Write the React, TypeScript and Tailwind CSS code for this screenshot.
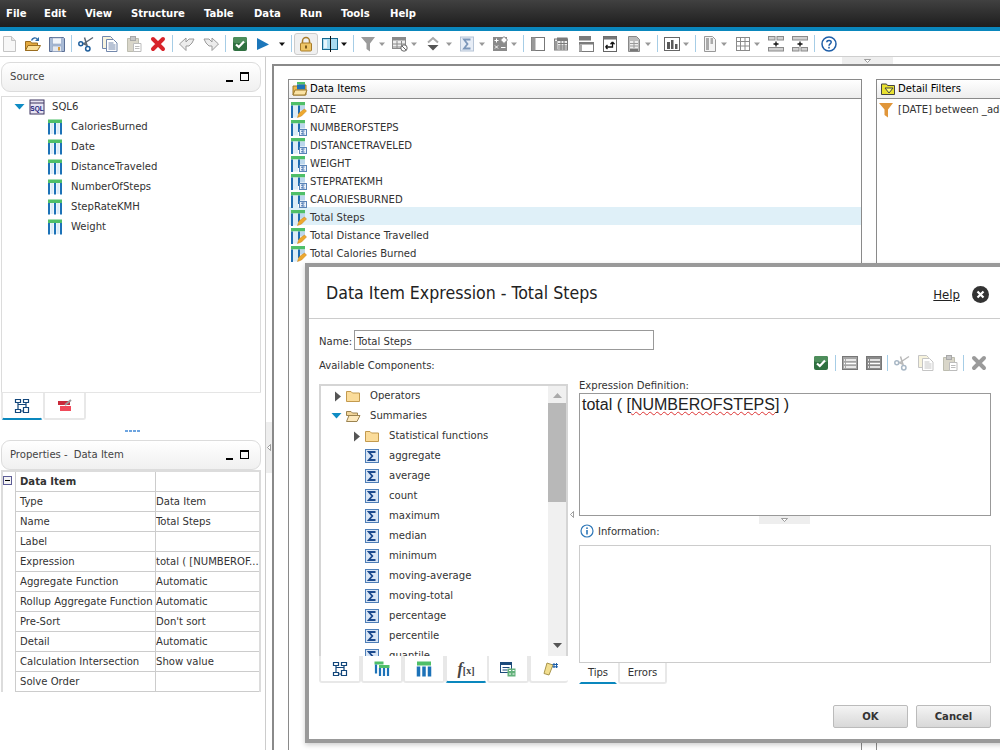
import type { ReactNode } from "react";

const S = ({ children, w = 16, h = 16 }: { children: ReactNode; w?: number; h?: number }) => (
  <svg width={w} height={h} viewBox={`0 0 ${w} ${h}`} className="shrink-0 block">
    {children}
  </svg>
);

// toolbar drawings
const NewDoc = () => (
  <S>
    <path d="M2.500 0.500h8l4 4v11h-12z" fill="#f7f7f7" stroke="#c4c4c4" />
    <path d="M10.500 0.500v4h4" fill="#e4e4e4" stroke="#c4c4c4" />
  </S>
);
const OpenFolder = () => (
  <S>
    <path d="M0.500 5.500h5l1 1.500h6v7.500H0.500z" fill="#e3a93f" stroke="#9a6c1e" />
    <path d="M0.500 14.500l2.500-5h12.500l-3 5z" fill="#fbdf97" stroke="#9a6c1e" />
    <path d="M6.500 4.500c1-3 4.500-3.500 6-1" fill="none" stroke="#2f6ca8" strokeWidth="1.400" />
    <path d="M14 1v4h-4z" fill="#2f6ca8" />
  </S>
);
const Save = () => (
  <S>
    <path d="M0.500 1.500h14l1 1v13H0.500z" fill="#a9bbd6" stroke="#5d7096" />
    <rect x="3.500" y="2" width="9" height="6" fill="#f2f5fa" stroke="#8fa2c0" strokeWidth="0.600" />
    <rect x="3.500" y="10" width="9" height="5.500" fill="#e5e9f0" stroke="#8fa2c0" strokeWidth="0.600" />
    <rect x="9" y="11" width="2" height="3.500" fill="#d79a3b" />
  </S>
);
const Cut = ({ faded = false }: { faded?: boolean }) => (
  <S>
    <g fill="none" strokeWidth="1.500">
      <path d="M4 7l5.500 2.500M15 1.500L6 7.500M6.500 1.500l2.800 9" stroke={faded ? "#b9b9b9" : "#5f6a75"} />
      <circle cx="2.800" cy="7.800" r="2" stroke={faded ? "#a9b8c6" : "#1f5f9c"} />
      <circle cx="9.800" cy="12.800" r="2.200" stroke={faded ? "#a9b8c6" : "#1f5f9c"} />
    </g>
  </S>
);
const Copy = ({ faded = false }: { faded?: boolean }) => {
  const c = faded ? "#c5c5c5" : "#7388ac";
  return (
    <S>
      <path d="M0.500 0.500h8l2 2v10h-10z" fill="#f7f3dd" stroke={c} />
      <path d="M4.500 3.500h7l3.500 3.500v8.500H4.500z" fill="#fff" stroke={c} />
      <path d="M6.500 7h5M6.500 9h7M6.500 11h7M6.500 13h7" stroke={c} />
    </S>
  );
};
const Paste = () => (
  <S>
    <path d="M1.500 2.500h11v13h-11z" fill="#d9d6c9" stroke="#bdbdb0" />
    <rect x="4.500" y="0.500" width="5" height="4" fill="#c6c6c6" stroke="#a8a8a8" />
    <path d="M7.500 7.500h7.500v8H7.500z" fill="#fff" stroke="#bcbcbc" />
    <path d="M9 10.500h4.500M9 12.500h4.500" stroke="#bcbcbc" />
  </S>
);
const Del = ({ faded = false }: { faded?: boolean }) => (
  <S>
    <path
      d="M3 3l10 10M13 3L3 13"
      stroke={faded ? "#9a9a9a" : "#d8232a"}
      strokeWidth="4"
      strokeLinecap="round"
    />
  </S>
);
const Undo = ({ flip = false }: { flip?: boolean }) => (
  <S>
    <path
      d={flip ? "M1 3h5l3 3V2l6.500 6L9 14.500V10H6L3 7z" : "M15 3h-5L7 6V2L0.500 8 7 14.500V10h3l3-3z"}
      fill="#ececec"
      stroke="#9a9a9a"
    />
  </S>
);
const Check = () => (
  <S>
    <rect x="1" y="1" width="14" height="14" rx="2" fill="#2f7040" />
    <rect x="1" y="1" width="14" height="6" rx="2" fill="#4d8d5b" />
    <path d="M4 8.500l2.800 2.500L12 5.500" fill="none" stroke="#fff" strokeWidth="2.200" />
  </S>
);
const Run = () => (
  <S>
    <path d="M2 2l12 6.500L2 14z" fill="#1c76ba" />
  </S>
);
const Lock = () => (
  <S>
    <path d="M4.500 7V5a3.500 3.500 0 017 0v2" fill="none" stroke="#a87c2a" strokeWidth="1.500" />
    <rect x="2.500" y="7" width="11" height="8" rx="1" fill="#eec566" stroke="#a87c2a" />
    <rect x="7" y="9.500" width="2" height="3" fill="#7a5a1c" />
  </S>
);
const Split = () => (
  <S>
    <rect x="0.500" y="2.500" width="15" height="11" fill="#a9dbf0" stroke="#17688f" />
    <rect x="2" y="4" width="3" height="8" fill="#e6f5fb" />
    <path d="M8.500 0v16" stroke="#111" />
  </S>
);
const Funnel = ({ c = "#9b9b9b" }: { c?: string }) => (
  <S>
    <path d="M1 1h14L10 7.500V15.500L6.500 13V7.500z" fill={c} />
  </S>
);
const TableOff = () => (
  <S>
    <rect x="0.500" y="1.500" width="13" height="11" fill="#eee" stroke="#8a8a8a" />
    <rect x="0.500" y="1.500" width="13" height="3" fill="#8a8a8a" />
    <path d="M1 8h13M1 11h13M5 5v8M9.500 5v8" stroke="#8a8a8a" />
    <circle cx="12" cy="12" r="3.200" fill="#fff" stroke="#666" />
    <path d="M10 10l4 4" stroke="#666" />
  </S>
);
const Sort = () => (
  <S>
    <path d="M3 6.500L8 2l5 4.500" fill="none" stroke="#aaa" strokeWidth="2" />
    <path d="M2.500 9h11L8 14.500z" fill="#555" />
  </S>
);
const SigmaTool = () => (
  <S>
    <rect x="1.500" y="1" width="13" height="14" fill="#e7edf6" stroke="#b6c4d6" />
    <path d="M11.500 3.500H5L8.500 8 5 12.500h6.500" fill="none" stroke="#7c97ba" strokeWidth="1.800" />
  </S>
);
const Calc = () => (
  <S>
    <rect x="1" y="1" width="14" height="14" fill="#8a8a8a" />
    <path d="M2.500 4.500h4M4.500 2.500v4M9 11.500h4.500M3 9.500l3 3M6 9.500l-3 3" stroke="#fff" />
    <path d="M12 0.500l3.500 3.500-3.500 3.500L8.500 4z" fill="#fff" stroke="#888" />
  </S>
);
const SideBar = () => (
  <S>
    <rect x="1.500" y="1.500" width="13" height="13" fill="#fff" stroke="#777" />
    <rect x="1.500" y="1.500" width="4" height="13" fill="#999" />
  </S>
);
const GridBox = () => (
  <S>
    <rect x="1.500" y="3" width="13" height="11" fill="#eee" stroke="#7b7b7b" />
    <rect x="4" y="1.500" width="10.500" height="3.500" fill="#7b7b7b" />
    <rect x="1.500" y="5" width="3" height="9" fill="#999" />
    <path d="M5 7.500h9.500M5 10h9.500M5 12h9.500M8 5v9M11 5v9" stroke="#7b7b7b" />
  </S>
);
const Stack = () => (
  <S>
    <rect x="1" y="0" width="12" height="4.500" fill="#7b7b7b" />
    <rect x="1.500" y="6.500" width="14" height="9" fill="#fff" stroke="#7b7b7b" />
    <rect x="1" y="6" width="15" height="2.500" fill="#7b7b7b" />
    <rect x="1" y="8.500" width="3" height="7" fill="#aaa" />
  </S>
);
const Swap = () => (
  <S>
    <rect x="1.500" y="0.500" width="13" height="15" fill="#fff" stroke="#666" />
    <rect x="1.500" y="0.500" width="13" height="3" fill="#777" />
    <path d="M4 11h6.500V7M3.500 11l2-2M3.500 11l2 2M10.500 6l-2 2.200M10.500 6l2 2.200" fill="none" stroke="#111" strokeWidth="1.300" />
  </S>
);
const Page = () => (
  <S>
    <path d="M2.500 0.500h8l3 3v12h-11z" fill="#bbb" stroke="#888" />
    <path d="M4 5h8v7H4z" fill="#eee" />
    <path d="M4 7.500h8M4 10h8M8 5v7" stroke="#999" />
    <rect x="4" y="13" width="8" height="2" fill="#777" />
  </S>
);
const Bars = () => (
  <S>
    <rect x="0.500" y="1.500" width="15" height="13" fill="#fff" stroke="#666" />
    <path d="M3 6h3v7H3zM7 4h2.500v9H7zM11 8h2.500v5H11z" fill="#5a5a5a" />
  </S>
);
const Blocks = () => (
  <S>
    <path d="M2.500 0.500h8l3 3v12h-11z" fill="#f4f4f4" stroke="#999" />
    <path d="M4 2h3v12H4zM8.500 2H11v6H8.500z" fill="#aaa" />
  </S>
);
const Cells = () => (
  <S>
    <rect x="1.500" y="1.500" width="13" height="13" fill="#fff" stroke="#8a8a8a" />
    <path d="M5.500 2v12M10 2v12M2 5.500h12M2 10h12" stroke="#8a8a8a" />
  </S>
);
const RowIns = ({ alt = false }: { alt?: boolean }) => (
  <S>
    {alt ? (
      <>
        <rect x="0.500" y="0.500" width="15" height="3.500" fill="#d0d0d0" stroke="#8a8a8a" />
        <rect x="0.500" y="11.500" width="6.500" height="3.500" fill="#d0d0d0" stroke="#8a8a8a" />
        <rect x="9" y="11.500" width="6.500" height="3.500" fill="#d0d0d0" stroke="#8a8a8a" />
      </>
    ) : (
      <>
        <rect x="0.500" y="0.500" width="6.500" height="3.500" fill="#d0d0d0" stroke="#8a8a8a" />
        <rect x="9" y="0.500" width="6.500" height="3.500" fill="#d0d0d0" stroke="#8a8a8a" />
        <rect x="0.500" y="11.500" width="15" height="3.500" fill="#d0d0d0" stroke="#8a8a8a" />
      </>
    )}
    <path d="M5.500 8h5M8 5.500v5" stroke="#111" strokeWidth="1.300" />
  </S>
);
const HelpIcon = () => (
  <S>
    <circle cx="8" cy="8" r="7" fill="#fff" stroke="#1e5ea8" strokeWidth="1.500" />
    <path d="M5.800 6.200C6 3.800 10.300 3.900 10.200 6.300 10.100 8 8 7.800 8 9.800" fill="none" stroke="#1e5ea8" strokeWidth="1.500" />
    <rect x="7.200" y="10.800" width="1.600" height="1.700" fill="#1e5ea8" />
  </S>
);
const Drop = ({ dark = false }: { dark?: boolean }) => (
  <svg width="8" height="16" viewBox="0 0 8 16" className="shrink-0 block">
    <path d="M1 6.500h6l-3 3.500z" fill={dark ? "#111" : "#999"} />
  </svg>
);
const Sep = ({ className }: { className: string }) => (
  <div className={`h-[17px] w-px shrink-0 bg-[#a6cde6] ${className}`} />
);

// tree and list drawings
const DataCol = ({ badge = "pencil" }: { badge?: "pencil" | "box" }) => (
  <S>
    <rect x="0" y="0" width="14" height="3.500" fill="#4fbf68" />
    <path d="M1 3.500V16M8 3.500V12" stroke="#1f6bb0" strokeWidth="2" />
    <rect x="2" y="3.500" width="5" height="12" fill="#dcecf7" />
    <rect x="9" y="3.500" width="5" height="5" fill="#bcd6ec" />
    {badge === "pencil" ? (
      <path d="M6.500 15.500l1.500-4.500 5.500-4 2 2-5 5z" fill="#eda82e" stroke="#c77f14" strokeWidth="0.500" />
    ) : (
      <>
        <rect x="8.500" y="9.500" width="7" height="6" fill="#eaf1fa" stroke="#5a84b8" />
        <path d="M13.500 11h-3l1.500 1.500-1.500 1.500h3" fill="none" stroke="#2f62a5" />
      </>
    )}
  </S>
);
const Field = () => (
  <S>
    <rect x="1" y="0.500" width="14" height="3.500" fill="#4fbf68" />
    <path d="M2 4v11.500M8 4v11.500M14 4v11.500" stroke="#1c72b8" strokeWidth="2" />
    <rect x="9.500" y="4" width="3" height="11" fill="#dcecf7" />
    <rect x="3.500" y="4" width="3" height="11" fill="#dcecf7" />
  </S>
);
const SqlIcon = () => (
  <S>
    <rect x="1" y="1" width="14" height="14" fill="#e7e4f2" stroke="#3c3560" />
    <path d="M1 4h14" stroke="#3c3560" />
    <text x="8" y="12" textAnchor="middle" fontSize="6.500" fontWeight="700" fill="#20207a" fontFamily="Liberation Sans, sans-serif">
      SQL
    </text>
  </S>
);
const ClosedFolder = () => (
  <S>
    <path d="M1.500 3.500h4.500l1.500 1.500h7v8.500h-13z" fill="#fbdc9a" stroke="#c39a4e" />
  </S>
);
const OpenFolderSm = () => (
  <S>
    <path d="M1.500 3.500h4.500l1.500 1.500h5v2.500h-11z" fill="#f2d59a" stroke="#9b8350" />
    <path d="M1.500 13.500l2.500-6h11l-3 6z" fill="#fde9bd" stroke="#9b8350" />
  </S>
);
const SigmaBox = () => (
  <S>
    <rect x="1.500" y="1.500" width="13" height="13" fill="#d8e5f5" stroke="#4f7fb8" />
    <path d="M11.500 4H4.800L8.300 8l-3.500 4h6.700" fill="none" stroke="#1b4a8e" strokeWidth="1.800" />
  </S>
);
const ArrowR = () => (
  <svg width="8" height="11" viewBox="0 0 8 11" className="block shrink-0">
    <path d="M1 0.500l6 5-6 5z" fill="#555" />
  </svg>
);
const ArrowD = () => (
  <svg width="11" height="8" viewBox="0 0 11 8" className="block shrink-0">
    <path d="M0.500 1h10l-5 5.500z" fill="#0f8cc4" />
  </svg>
);
const MinMax = () => (
  <div className="flex items-center gap-[7px]">
    <div className="mt-[8px] h-[2px] w-[7px] bg-black" />
    <div className="h-[9px] w-[9px] border border-t-2 border-black" />
  </div>
);

// tab drawings
const Hier = () => (
  <S>
    <path d="M1.500 1.500h5v3h-5zM9.500 1.500h5v3h-5zM1.500 11.500h5v3h-5zM9.500 9.500h5v5h-5zM4 4.500v2h8M12 4.500v5M6.500 13h3M4 6.500V11.500" fill="none" stroke="#12467a" strokeWidth="1.200" />
  </S>
);
const Stacked = () => (
  <S>
    <rect x="0.500" y="0.500" width="9" height="3" fill="#4fbf68" />
    <rect x="5" y="4" width="10.500" height="3" fill="#4fbf68" />
    <path d="M2 3.500v9M6 7v8M10 7v8M14 7v8" stroke="#1c72b8" strokeWidth="2.200" />
  </S>
);
const Columns = () => (
  <S>
    <rect x="1" y="0.500" width="14" height="4" fill="#4fbf68" />
    <path d="M2.500 5.500v10M8 5.500v10M13.500 5.500v10" stroke="#1c72b8" strokeWidth="3.500" />
  </S>
);
const TableCalc = () => (
  <S>
    <rect x="0.500" y="1.500" width="11" height="10" fill="#fff" stroke="#1c4a7a" />
    <rect x="0.500" y="1.500" width="11" height="2.500" fill="#1c4a7a" />
    <path d="M2.500 6.500h7M2.500 9h5" stroke="#1c4a7a" />
    <rect x="7.500" y="7.500" width="8" height="8" fill="#63b17b" />
    <path d="M9 9.500h2M12.500 9.500h2M9 13h2M12.500 13h2" stroke="#fff" />
  </S>
);
const Scroll = () => (
  <S>
    <path d="M5 2l6 2-4 10-5-1.500z" fill="#f2de8f" stroke="#a8954c" />
    <path d="M12 2v5M14.500 2v5M10.500 3.500h5.500M10.500 5.800h5.500" stroke="#1c5fa8" />
  </S>
);
const Info = () => (
  <S w={14} h={14}>
    <circle cx="7" cy="7" r="6" fill="#fff" stroke="#2f78b8" strokeWidth="1.200" />
    <rect x="6.200" y="6" width="1.600" height="4.500" fill="#2f78b8" />
    <rect x="6.200" y="3.400" width="1.600" height="1.600" fill="#2f78b8" />
  </S>
);
const RowsTool = ({ dark = false }: { dark?: boolean }) => (
  <S>
    <rect x="0.500" y="1.500" width="15" height="13" fill={dark ? "#8a8a8a" : "#a5a5a5"} stroke="#777" />
    <path d="M4 5h10M4 8.500h10M4 12h10M2 5h1M2 8.500h1M2 12h1" stroke="#fff" strokeWidth="1.300" />
  </S>
);

const menu = [
  ["File", "w-[38px]"],
  ["Edit", "w-[41px]"],
  ["View", "w-[46px]"],
  ["Structure", "w-[73px]"],
  ["Table", "w-[50px]"],
  ["Data", "w-[46px]"],
  ["Run", "w-[41px]"],
  ["Tools", "w-[49px]"],
  ["Help", "w-[40px]"],
];

const sourceFields = ["CaloriesBurned", "Date", "DistanceTraveled", "NumberOfSteps", "StepRateKMH", "Weight"];

const dataItems: [string, "pencil" | "box"][] = [
  ["DATE", "pencil"],
  ["NUMBEROFSTEPS", "box"],
  ["DISTANCETRAVELED", "box"],
  ["WEIGHT", "box"],
  ["STEPRATEKMH", "box"],
  ["CALORIESBURNED", "box"],
  ["Total Steps", "pencil"],
  ["Total Distance Travelled", "pencil"],
  ["Total Calories Burned", "pencil"],
];

const props = [
  ["Type", "Data Item"],
  ["Name", "Total Steps"],
  ["Label", ""],
  ["Expression", "total ( [NUMBEROF..."],
  ["Aggregate Function", "Automatic"],
  ["Rollup Aggregate Function", "Automatic"],
  ["Pre-Sort", "Don't sort"],
  ["Detail", "Automatic"],
  ["Calculation Intersection", "Show value"],
  ["Solve Order", ""],
];

const summaries = [
  "aggregate",
  "average",
  "count",
  "maximum",
  "median",
  "minimum",
  "moving-average",
  "moving-total",
  "percentage",
  "percentile",
  "quantile",
];

function Tab({ children, active, className = "" }: { children: ReactNode; active?: boolean; className?: string }) {
  return (
    <div
      className={`flex items-center justify-center rounded-b-[3px] border-x-2 border-b-2 ${
        active ? "border-x-transparent border-b-[#0a87bd]" : "border-[#e8e8e8]"
      } ${className}`}
    >
      {children}
    </div>
  );
}

function PanelHeader({ children }: { children: ReactNode }) {
  return (
    <div className="ml-px flex h-[30px] w-[260px] items-center justify-between rounded-[9px] border border-[#dcdcdc] bg-gradient-to-b from-white to-[#f0f0f0] pb-px pl-[8px] pr-[11px] text-[#444]">
      {children}
    </div>
  );
}

function ListPanel({ title, icon, className, children }: { title: string; icon: ReactNode; className: string; children: ReactNode }) {
  return (
    <div className={`h-[700px] shrink-0 border border-[#8a8a8a] ${className}`}>
      <div className="flex h-[19px] items-center gap-[2px] border-b border-[#8a8a8a] bg-gradient-to-b from-white to-[#ededed] pl-[3px] text-black">
        {icon}
        {title}
      </div>
      {children}
    </div>
  );
}

export default function App() {
  return (
    <div className="relative h-[750px] w-[1000px] overflow-hidden bg-white text-[11.2px] leading-none text-[#333] [font-family:'DejaVu_Sans_Condensed','Noto_Sans',sans-serif]">
      {/* menu */}
      <div className="flex h-[27px] items-center bg-gradient-to-b from-[#414141] to-[#1e1e1e] pl-[6px] font-bold text-white">
        {menu.map(([m, w]) => (
          <div key={m} className={w}>
            {m}
          </div>
        ))}
      </div>
      <div className="h-[4px] bg-[#0a87bd]" />

      {/* toolbar */}
      <div className="flex h-[26px] items-center border-b border-[#cfcfcf] pl-px">
        <NewDoc />
        <div className="ml-[8px]"><OpenFolder /></div>
        <div className="ml-[8px]"><Save /></div>
        <Sep className="ml-[6px]" />
        <div className="ml-[6px]"><Cut /></div>
        <div className="ml-[8px]"><Copy /></div>
        <div className="ml-[8px]"><Paste /></div>
        <div className="ml-[8px]"><Del /></div>
        <Sep className="ml-[6px]" />
        <div className="ml-[6px]"><Undo /></div>
        <div className="ml-[8px]"><Undo flip /></div>
        <Sep className="ml-[6px]" />
        <div className="ml-[6px]"><Check /></div>
        <div className="ml-[7px]"><Run /></div>
        <div className="ml-[7px]"><Drop dark /></div>
        <Sep className="ml-[5px]" />
        <div className="ml-[2px] flex h-[22px] w-[24px] items-center justify-center rounded-[3px] border border-[#ccc] bg-[#f0f0f0]"><Lock /></div>
        <div className="ml-[4px]"><Split /></div>
        <div className="ml-[2px]"><Drop dark /></div>
        <Sep className="ml-[5px]" />
        <div className="ml-[6px]"><Funnel /></div>
        <div className="ml-[2px]"><Drop /></div>
        <div className="ml-[6px]"><TableOff /></div>
        <div className="ml-[2px]"><Drop /></div>
        <div className="ml-[7px]"><Sort /></div>
        <div className="ml-[4px]"><Drop /></div>
        <div className="ml-[6px]"><SigmaTool /></div>
        <div className="ml-[3px]"><Drop /></div>
        <div className="ml-[6px]"><Calc /></div>
        <div className="ml-[2px]"><Drop /></div>
        <Sep className="ml-[5px]" />
        <div className="ml-[6px]"><SideBar /></div>
        <div className="ml-[7px]"><GridBox /></div>
        <div className="ml-[9px]"><Stack /></div>
        <div className="ml-[8px]"><Swap /></div>
        <div className="ml-[8px]"><Page /></div>
        <div className="ml-[2px]"><Drop /></div>
        <Sep className="ml-[5px]" />
        <div className="ml-[6px]"><Bars /></div>
        <div className="ml-[2px]"><Drop /></div>
        <Sep className="ml-[5px]" />
        <div className="ml-[6px]"><Blocks /></div>
        <div className="ml-[2px]"><Drop /></div>
        <div className="ml-[7px]"><Cells /></div>
        <div className="ml-[2px]"><Drop /></div>
        <div className="ml-[7px]"><RowIns /></div>
        <div className="ml-[8px]"><RowIns alt /></div>
        <Sep className="ml-[6px]" />
        <div className="ml-[6px]"><HelpIcon /></div>
      </div>

      <div className="flex h-[693px]">
        {/* left column */}
        <div className="w-[265px] shrink-0 pt-[5px]">
          <PanelHeader>
            <span>Source</span>
            <MinMax />
          </PanelHeader>
          <div className="ml-px mt-[4px] h-[296px] w-[260px] border-x border-t border-[#dcdcdc]">
            <div className="flex h-[20px] items-center pb-px pl-[12px]">
              <ArrowD />
              <div className="ml-[4px]"><SqlIcon /></div>
              <span className="ml-[7px]">SQL6</span>
            </div>
            {sourceFields.map((f) => (
              <div key={f} className="flex h-[20px] items-center pb-px pl-[45px]">
                <Field />
                <span className="ml-[8px]">{f}</span>
              </div>
            ))}
          </div>
          <div className="ml-px flex h-[28px] w-[260px] border-t border-[#e5e5e5]">
            <Tab active className="w-[42px] border-l-2 border-l-[#e8e8e8]"><Hier /></Tab>
            <Tab className="w-[43px]">
              <S>
                <path d="M1 3h12v4H1z" fill="#c92a3a" />
                <path d="M3 8h11v5H3z" fill="#f04a5a" />
                <path d="M8 7l6-5" stroke="#999" strokeWidth="2" />
              </S>
            </Tab>
          </div>
          <div className="flex h-[20px] items-center justify-center gap-px pt-[2px]">
            <div className="h-[2px] w-[3px] bg-[#6ea5e0]" />
            <div className="h-[2px] w-[3px] bg-[#6ea5e0]" />
            <div className="h-[2px] w-[3px] bg-[#6ea5e0]" />
            <div className="h-[2px] w-[3px] bg-[#6ea5e0]" />
          </div>
          <PanelHeader>
            <span>
              Properties -<span className="ml-[6px]">Data Item</span>
            </span>
            <MinMax />
          </PanelHeader>
          <div className="ml-px flex w-[260px] border-x-2 border-t-2 border-[#dcdcdc]">
            <div className="w-[12px] shrink-0 pt-[4px]">
              <div className="flex h-[9px] w-[9px] items-center justify-center border border-[#5c5c96] bg-[#f4f4f4]">
                <div className="h-px w-[5px] bg-black" />
              </div>
            </div>
            <div className="min-w-0 flex-1 border-l border-[#ccc]">
              <div className="flex h-[20px] border-b border-[#ccc]">
                <div className="flex w-[140px] items-center border-r border-[#ccc] pl-[4px] pt-px font-bold">Data Item</div>
              </div>
              {props.map(([k, v]) => (
                <div key={k} className="flex h-[20px] border-b border-[#ccc]">
                  <div className="flex w-[140px] shrink-0 items-center overflow-hidden whitespace-nowrap border-r border-[#ccc] pl-[4px] pt-px">{k}</div>
                  <div className="flex min-w-0 items-center overflow-hidden whitespace-nowrap pt-px">{v}</div>
                </div>
              ))}
            </div>
          </div>
        </div>

        {/* splitter */}
        <div className="w-[7px] shrink-0 border-l border-[#ccc] pt-[365px]">
          <div className="flex h-[51px] items-center justify-center bg-[#eee]">
            <svg width="4" height="7" viewBox="0 0 4 7" className="block">
              <path d="M3.500 0.500v6L0.500 3.500z" fill="#fff" stroke="#777" strokeWidth="0.700" />
            </svg>
          </div>
        </div>

        {/* report area */}
        <div className="min-w-0 flex-1">
          <div className="flex h-[7px]">
            <div className="ml-[570px] flex h-[7px] w-[51px] items-center justify-center bg-[#eee]">
              <svg width="7" height="4" viewBox="0 0 7 4" className="block">
                <path d="M0.500 0.500h6l-3 3z" fill="#fff" stroke="#777" strokeWidth="0.700" />
              </svg>
            </div>
          </div>
          <div className="flex h-[686px] gap-[14px] overflow-hidden border-l-2 border-t-2 border-[#8a8a8a] pl-[14px] pt-[13px]">
            <ListPanel
              title="Data Items"
              className="w-[574px]"
              icon={
                <S>
                  <path d="M1 5h5l1-1h7v10H1z" fill="#eeb94d" stroke="#9d7a2e" />
                  <rect x="5" y="1" width="8" height="2.500" fill="#4fbf68" />
                  <rect x="5" y="3.500" width="8" height="5" fill="#1c72b8" />
                  <path d="M1 14l2-5h12l-2 5z" fill="#fbe3a4" stroke="#9d7a2e" />
                </S>
              }
            >
              {dataItems.map(([name, badge]) => (
                <div
                  key={name}
                  className={`flex h-[18px] items-center gap-[3px] pl-[2px] pt-[4px] ${name === "Total Steps" ? "bg-[#dff0f8]" : ""}`}
                >
                  <DataCol badge={badge} />
                  {name}
                </div>
              ))}
            </ListPanel>
            <ListPanel
              title="Detail Filters"
              className="w-[200px]"
              icon={
                <S>
                  <path d="M1.500 3h5l1 1.500h7v9h-13z" fill="#e8e030" stroke="#444" />
                  <path d="M5 7h8l-4 5z" fill="#ffff70" stroke="#444" />
                </S>
              }
            >
              <div className="flex h-[18px] items-center gap-[4px] whitespace-nowrap pl-px pt-[4px]">
                <Funnel c="#e0963a" />
                [DATE] between _add_days
              </div>
            </ListPanel>
          </div>
        </div>
      </div>

      {/* expression dialog */}
      <div className="absolute left-[305px] top-[263px] h-[480px] w-[700px] border-4 border-[#999] bg-white shadow-[0_2px_5px_rgba(0,0,0,0.2)]">
        <div className="flex h-[52px] items-center justify-between border-b border-[#ccc] pl-[17px] pr-[12px] pt-[3px]">
          <div className="text-[17.6px] text-[#222]">Data Item Expression - Total Steps</div>
          <div className="flex items-center gap-[12px]">
            <span className="text-[13px] text-[#222] underline">Help</span>
            <div className="flex h-[17px] w-[17px] items-center justify-center rounded-full bg-[#333]">
              <svg width="9" height="9" viewBox="0 0 9 9" className="block">
                <path d="M1.500 1.500l6 6M7.500 1.500l-6 6" stroke="#fff" strokeWidth="2.200" />
              </svg>
            </div>
          </div>
        </div>

        <div className="pl-[10px] pr-[10px]">
          <div className="flex items-center pt-[11px]">
            <span className="w-[35px] pt-[3px]">Name:</span>
            <div className="flex h-[20px] w-[300px] items-center border border-[#999] pl-[2px] pt-[3px]">Total Steps</div>
          </div>
          <div className="mt-[5px] flex h-[20px] items-center justify-between">
            <span className="pt-[2px]">Available Components:</span>
            <div className="mb-[4px] flex items-center pr-[4px]">
              <Check />
              <div className="ml-[6px] h-[16px] w-px bg-[#a6cde6]" />
              <div className="ml-[6px]"><RowsTool /></div>
              <div className="ml-[8px]"><RowsTool dark /></div>
              <div className="ml-[5px] h-[16px] w-px bg-[#a6cde6]" />
              <div className="ml-[6px]"><Cut faded /></div>
              <div className="ml-[8px]"><Copy faded /></div>
              <div className="ml-[8px]"><Paste /></div>
              <div className="ml-[5px] h-[16px] w-px bg-[#a6cde6]" />
              <div className="ml-[7px]"><Del faded /></div>
            </div>
          </div>

          <div className="mt-[2px] flex">
            {/* available components */}
            <div className="w-[249px] shrink-0 pt-[7px]">
              <div className="flex h-[272px] border-x-2 border-t-2 border-[#d5d5d5]">
                <div className="min-w-0 flex-1 overflow-hidden">
                  <div className="flex h-[20px] items-center pl-[13px]">
                    <ArrowR />
                    <div className="ml-[3px]"><ClosedFolder /></div>
                    <span className="ml-[9px]">Operators</span>
                  </div>
                  <div className="flex h-[20px] items-center pl-[10px]">
                    <ArrowD />
                    <div className="ml-[3px]"><OpenFolderSm /></div>
                    <span className="ml-[9px]">Summaries</span>
                  </div>
                  <div className="flex h-[20px] items-center pl-[32px]">
                    <ArrowR />
                    <div className="ml-[3px]"><ClosedFolder /></div>
                    <span className="ml-[9px]">Statistical functions</span>
                  </div>
                  {summaries.map((s) => (
                    <div key={s} className="flex h-[20px] items-center pl-[43px]">
                      <SigmaBox />
                      <span className="ml-[9px]">{s}</span>
                    </div>
                  ))}
                </div>
                <div className="flex w-[18px] shrink-0 flex-col items-center bg-[#f0f0f0] pt-[7px]">
                  <svg width="9" height="5" viewBox="0 0 9 5" className="block">
                    <path d="M4.500 0l4.500 5H0z" fill="#aaa" />
                  </svg>
                  <div className="mt-[5px] h-[99px] w-[18px] bg-[#b8b8b8]" />
                  <svg width="9" height="5" viewBox="0 0 9 5" className="mt-[141px] block">
                    <path d="M0 0h9L4.500 5z" fill="#555" />
                  </svg>
                </div>
              </div>
              <div className="flex h-[27px]">
                <Tab className="w-[42px]"><Hier /></Tab>
                <Tab className="w-[42px]"><Stacked /></Tab>
                <Tab className="w-[42px]"><Columns /></Tab>
                <Tab active className="w-[42px] border-l-2 border-l-[#e8e8e8]">
                  <span className="text-[10px] font-bold text-[#444] [font-family:'Liberation_Serif',serif]">
                    <i className="text-[16px]">f</i>[x]
                  </span>
                </Tab>
                <Tab className="w-[42px]"><TableCalc /></Tab>
                <Tab className="w-[39px] border-r-0"><Scroll /></Tab>
              </div>
            </div>

            <div className="w-[11px] shrink-0 pl-[2px] pt-[134px]">
              <svg width="4" height="7" viewBox="0 0 4 7" className="block">
                <path d="M3.500 0.500v6L0.500 3.500z" fill="#fff" stroke="#777" strokeWidth="0.700" />
              </svg>
            </div>

            {/* expression */}
            <div className="min-w-0 flex-1">
              <div className="h-[16px] pt-[3px]">Expression Definition:</div>
              <div className="h-[123px] border border-[#999] pl-[2px] pt-[2px] text-[16px] leading-[17px] text-[#222] [font-family:'Liberation_Sans',sans-serif]">
                total ( [<span className="underline decoration-[#d33] decoration-wavy decoration-1">NUMBEROFSTEPS</span>] )
              </div>
              <div className="flex h-[8px] justify-center">
                <div className="ml-[-1px] flex h-[8px] w-[51px] items-center justify-center bg-[#eee]">
                  <svg width="7" height="4" viewBox="0 0 7 4" className="block">
                    <path d="M0.500 0.500h6l-3 3z" fill="#fff" stroke="#777" strokeWidth="0.700" />
                  </svg>
                </div>
              </div>
              <div className="flex h-[21px] items-start gap-[4px] pl-px pt-0">
                <Info />
                <span className="mt-[2px]">Information:</span>
              </div>
              <div className="h-[117px] border-x border-t border-[#ccc]" />
              <div className="flex h-[22px] border-t border-[#ccc]">
                <Tab active className="w-[38px] rounded-b-none">Tips</Tab>
                <Tab className="ml-px w-[49px]">Errors</Tab>
              </div>
            </div>
          </div>

          <div className="mt-[21px] flex justify-end gap-[8px]">
            <button className="h-[23px] w-[75px] rounded-[2px] border border-[#bbb] bg-gradient-to-b from-[#f4f4f4] to-[#d8d8d8] font-bold text-[#333]">OK</button>
            <button className="h-[23px] w-[75px] rounded-[2px] border border-[#bbb] bg-gradient-to-b from-[#f4f4f4] to-[#d8d8d8] font-bold text-[#333]">Cancel</button>
          </div>
        </div>
      </div>
    </div>
  );
}
